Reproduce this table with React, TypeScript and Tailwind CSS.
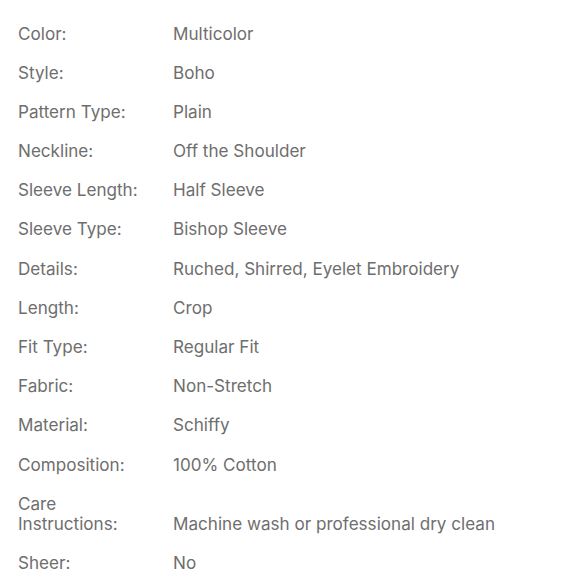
const rows: [string, string][] = [
  ["Color:", "Multicolor"],
  ["Style:", "Boho"],
  ["Pattern Type:", "Plain"],
  ["Neckline:", "Off the Shoulder"],
  ["Sleeve Length:", "Half Sleeve"],
  ["Sleeve Type:", "Bishop Sleeve"],
  ["Details:", "Ruched, Shirred, Eyelet Embroidery"],
  ["Length:", "Crop"],
  ["Fit Type:", "Regular Fit"],
  ["Fabric:", "Non-Stretch"],
  ["Material:", "Schiffy"],
  ["Composition:", "100% Cotton"],
  ["Care Instructions:", "Machine wash or professional dry clean"],
  ["Sheer:", "No"],
]

export default function App() {
  return (
    <div className="w-[580px] h-[580px] overflow-hidden bg-white font-['Inter',sans-serif] text-[17.1px] leading-[20px] text-[#6e6e6e]">
      <div className="flex flex-col gap-[19.2px] pt-[23.5px] pl-[18px] pr-4">
        {rows.map(([label, value]) => (
          <div key={label} className="flex items-end">
            <div className="w-[155px] shrink-0 pr-[20px]">{label}</div>
            <div>{value}</div>
          </div>
        ))}
      </div>
    </div>
  )
}
